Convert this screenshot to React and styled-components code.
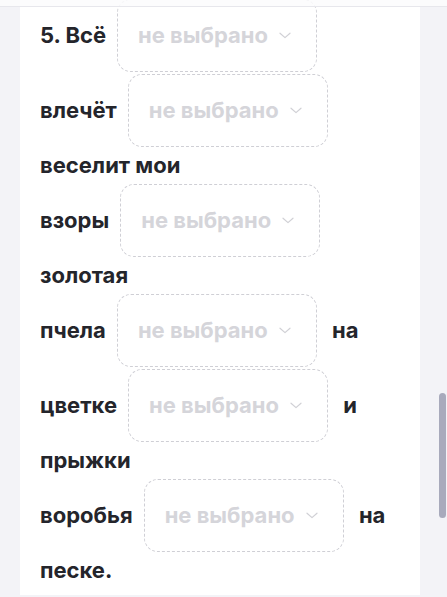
import React from "react";
import styled, { createGlobalStyle } from "styled-components";

const Global = createGlobalStyle`
  html, body { margin: 0; padding: 0; height: 100%; overflow: hidden; }
  body { background: #f3f3f7; font-family: Inter, "Noto Sans", sans-serif; }
`;

const TopBar = styled.div`
  position: fixed;
  top: 0;
  left: 0;
  right: 0;
  height: 6px;
  background: rgba(252, 252, 253, 0.85);
  border-bottom: 1px solid #e7e7ec;
  z-index: 2;
`;

const Card = styled.div`
  width: 400px;
  margin-left: 20px;
  background: #ffffff;
  box-sizing: border-box;
  padding: 0 20px;
  min-height: 100vh;
`;

const Sentence = styled.p`
  margin: -2px 0 0 0;
  font-size: 22px;
  font-weight: 700;
  line-height: 35px;
  color: #24252b;
`;

const Unit = styled.span`
  white-space: nowrap;
`;

const Select = styled.span`
  display: inline-flex;
  align-items: center;
  box-sizing: border-box;
  width: 200px;
  margin: 1px ${(p) => (p.$after ? "10px" : "0")} 1px 11px;
  padding: 18px 20px;
  border: 1px dashed #cfcfd5;
  border-radius: 14px;
  line-height: 35px;
  color: #d5d5da;
  vertical-align: baseline;
`;

const Placeholder = styled.span`
  font-weight: 700;
`;

const Chevron = styled.svg`
  width: 12px;
  height: 7px;
  margin-left: 11px;
  flex: none;
`;

const ScrollThumb = styled.div`
  position: fixed;
  left: 439px;
  top: 393px;
  width: 7px;
  height: 125px;
  border-radius: 4px;
  background: #a8aabc;
`;

function Dropdown({ after }) {
  return (
    <Select $after={after}>
      <Placeholder>не выбрано</Placeholder>
      <Chevron viewBox="0 0 12 7" fill="none">
        <path d="M1 1.2 L6 5.6 L11 1.2" stroke="#d0d0d5" strokeWidth="1.2" strokeLinecap="round" strokeLinejoin="round" />
      </Chevron>
    </Select>
  );
}

const parts = [
  { w: "5. Всё", box: true },
  { w: "влечёт", box: true },
  { w: "веселит" },
  { w: "мои" },
  { w: "взоры", box: true },
  { w: "золотая" },
  { w: "пчела", box: true, after: true },
  { w: "на" },
  { w: "цветке", box: true, after: true },
  { w: "и" },
  { w: "прыжки" },
  { w: "воробья", box: true, after: true },
  { w: "на" },
  { w: "песке." },
];

export default function App() {
  return (
    <>
      <Global />
      <TopBar />
      <Card>
        <Sentence>
          {parts.map((p, i) => (
            <React.Fragment key={i}>
              <Unit>
                {p.w}
                {p.box && <Dropdown after={p.after} />}
              </Unit>
              {i < parts.length - 1 ? " " : ""}
            </React.Fragment>
          ))}
        </Sentence>
      </Card>
      <ScrollThumb />
    </>
  );
}
